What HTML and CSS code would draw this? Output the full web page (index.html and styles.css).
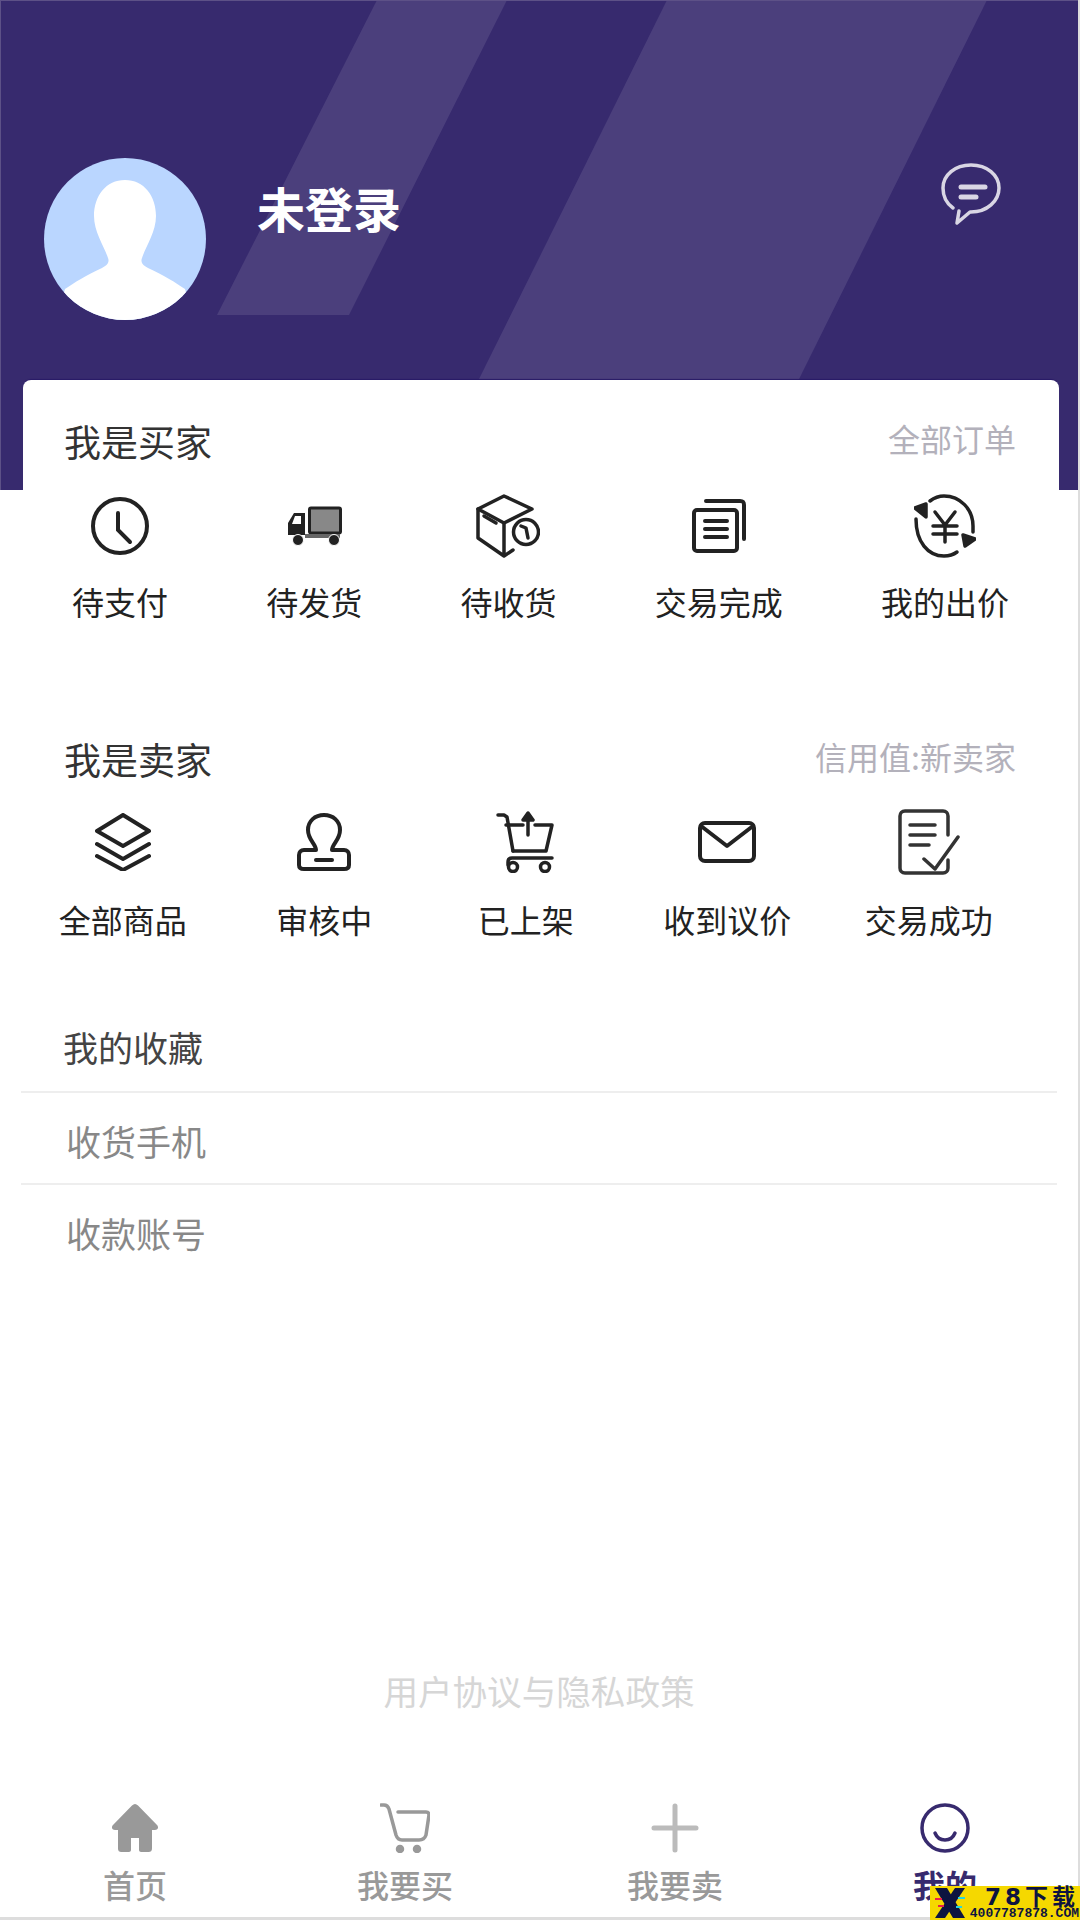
FILE: index.html
```html
<!DOCTYPE html>
<html lang="zh-CN">
<head>
  <meta charset="UTF-8" />
  <title>我的</title>
  <link rel="stylesheet" href="styles.css">
</head>
<body>
  <div class="page">
    <header class="top">
      <svg class="stripes" width="1078" height="490" viewBox="0 0 1078 490">
        <polygon points="377,0 507,0 349,315 217,315" fill="#fff" fill-opacity="0.1" />
        <polygon points="667,0 987,0 744,490 424,490" fill="#fff" fill-opacity="0.1" />
      </svg>
      <div class="avatar">
        <svg width="162" height="162" viewBox="0 0 162 162">
          <defs>
            <clipPath id="avatarClip"><circle cx="81" cy="81" r="81" /></clipPath>
          </defs>
          <circle cx="81" cy="81" r="81" fill="#bad6ff" />
          <path clip-path="url(#avatarClip)" d="M81 22C62 22 50 38 50 58c0 16 10 30 14 42 2 5-2 8-6 10-16 7-28 15-37 21l-9 31h138l-9-31c-9-6-21-14-37-21-4-2-8-5-6-10 4-12 14-26 14-42C112 38 100 22 81 22z" fill="#fff" />
        </svg>
      </div>
      <div class="name">未登录</div>
      <svg class="chat" width="64" height="66" viewBox="0 0 64 66" fill="none" stroke="#d9d6e4" stroke-width="3.5" stroke-linecap="round" stroke-linejoin="round">
        <path d="M12 45C5 40 2 33 2 25 2 12 14 2 30 2s28 10 28 23-12 24-28 24h-1L16 60l2-12" />
        <path d="M20 24h24" stroke-width="5" />
        <path d="M20 34h15" stroke-width="5" />
      </svg>
    </header>

    <main class="card">
      <section class="block">
        <div class="block-head">
          <h2 class="block-title">我是买家</h2>
          <span class="block-more">全部订单</span>
        </div>
        <div class="buyer-row">
          <a class="entry">
            <span class="entry-icon">
              <svg width="58" height="58" viewBox="0 0 58 58" fill="none" stroke="#222" stroke-width="4" stroke-linecap="round">
                <circle cx="29" cy="29" r="27" />
                <path d="M27 16v17l12 12" />
              </svg>
            </span>
            <span class="entry-label">待支付</span>
          </a>
          <a class="entry">
            <span class="entry-icon">
              <svg width="56" height="42" viewBox="0 0 56 42">
                <rect x="23.500" y="3" width="31" height="25" rx="1.500" fill="#888" stroke="#222" stroke-width="3" />
                <path d="M2 30V18l6-10h11v22H2z" fill="#222" />
                <path d="M9 11h6v8H6z" fill="#fff" />
                <rect x="19" y="29" width="35" height="4" fill="#666" />
                <circle cx="12" cy="35" r="5.500" fill="#222" stroke="#fff" stroke-width="1" />
                <circle cx="48" cy="35" r="5.500" fill="#222" stroke="#fff" stroke-width="1" />
              </svg>
            </span>
            <span class="entry-label">待发货</span>
          </a>
          <a class="entry">
            <span class="entry-icon">
              <svg width="64" height="64" viewBox="0 0 64 64" fill="none" stroke="#222" stroke-width="3.500" stroke-linecap="round" stroke-linejoin="round">
                <path d="M28 2L2 15l26 14 28-14L28 2z" />
                <path d="M2 15v29l26 18 9-6M28 29v33" />
                <path d="M8 22l12 7" />
                <circle cx="50" cy="38" r="12.500" />
                <path d="M45 32l5 2 2 10" />
              </svg>
            </span>
            <span class="entry-label">待收货</span>
          </a>
          <a class="entry">
            <span class="entry-icon">
              <svg width="54" height="54" viewBox="0 0 54 54" fill="none" stroke="#222" stroke-width="4" stroke-linecap="round" stroke-linejoin="round">
                <rect x="2" y="11" width="43" height="41" rx="3" />
                <path d="M14 2h34c3 0 4 1 4 4v34" />
                <path d="M13 22h22M13 30h22M13 38h22" />
              </svg>
            </span>
            <span class="entry-label">交易完成</span>
          </a>
          <a class="entry">
            <span class="entry-icon">
              <svg width="62" height="64" viewBox="0 0 62 64" fill="none" stroke="#222" stroke-width="3.500" stroke-linecap="round" stroke-linejoin="round">
                <path d="M16 7c4-3 9-5 14-5 16 0 29 13 29 30v6" />
                <path d="M43 58c-4 3-8 4-13 4C14 62 2 48 2 25" />
                <path d="M1 14l11-4v13z" fill="#222" />
                <path d="M49 41l12 4-10 7z" fill="#222" />
                <path d="M21 18l10 13 10-13M19 32h24M19 40h24M31 31v17" />
              </svg>
            </span>
            <span class="entry-label">我的出价</span>
          </a>
        </div>
      </section>

      <section class="block block-seller">
        <div class="block-head">
          <h2 class="block-title">我是卖家</h2>
          <span class="block-more">信用值:新卖家</span>
        </div>
        <div class="seller-row">
          <a class="entry">
            <span class="entry-icon">
              <svg width="56" height="58" viewBox="0 0 56 58" fill="none" stroke="#222" stroke-width="4" stroke-linecap="round" stroke-linejoin="round">
                <path d="M28 2L2 18l26 15 26-15L28 2z" />
                <path d="M2 31l26 15 26-15" />
                <path d="M2 43l26 14 26-14" />
              </svg>
            </span>
            <span class="entry-label">全部商品</span>
          </a>
          <a class="entry">
            <span class="entry-icon">
              <svg width="54" height="58" viewBox="0 0 54 58" fill="none" stroke="#222" stroke-width="4" stroke-linecap="round" stroke-linejoin="round">
                <path d="M19 37c0-6-8-10-8-20C11 8 18 2 27 2s16 6 16 15c0 10-8 14-8 20h12c3 0 5 2 5 5v10c0 3-2 4-5 4H7c-3 0-5-1-5-4V42c0-3 2-5 5-5h12z" />
                <path d="M19 47h16" />
              </svg>
            </span>
            <span class="entry-label">审核中</span>
          </a>
          <a class="entry">
            <span class="entry-icon">
              <svg width="60" height="62" viewBox="0 0 60 62" fill="none" stroke="#222" stroke-width="3.500" stroke-linecap="round" stroke-linejoin="round">
                <path d="M2 4h6l3 2 6 34" />
                <path d="M10 14h17M39 14h17l-6 26H17" />
                <path d="M56 47H16c-3 0-4 2-4 4v3" />
                <path d="M32 24V6" />
                <path d="M27 9l5-7 5 7z" fill="#222" />
                <circle cx="17" cy="56" r="4.500" />
                <circle cx="49" cy="56" r="4.500" />
              </svg>
            </span>
            <span class="entry-label">已上架</span>
          </a>
          <a class="entry">
            <span class="entry-icon">
              <svg width="58" height="42" viewBox="0 0 58 42" fill="none" stroke="#222" stroke-width="4" stroke-linecap="round" stroke-linejoin="round">
                <rect x="2" y="2" width="54" height="38" rx="5" />
                <path d="M3 5l26 20L55 5" />
              </svg>
            </span>
            <span class="entry-label">收到议价</span>
          </a>
          <a class="entry">
            <span class="entry-icon">
              <svg width="62" height="66" viewBox="0 0 62 66" fill="none" stroke="#333" stroke-width="3.500" stroke-linecap="round" stroke-linejoin="round">
                <path d="M50 26V7c0-3-2-5-5-5H7C4 2 2 4 2 7v52c0 3 2 5 5 5h38c3 0 5-2 5-5V51" />
                <path d="M12 16h25M12 26h25M12 36h19" />
                <path d="M26 50l11 10 23-32" />
              </svg>
            </span>
            <span class="entry-label">交易成功</span>
          </a>
        </div>
      </section>

      <ul class="links">
        <li class="link link-dark">我的收藏</li>
        <li class="link">收货手机</li>
        <li class="link">收款账号</li>
      </ul>
    </main>

    <div class="agreement">用户协议与隐私政策</div>

    <nav class="tabs">
      <a class="tab">
        <svg width="50" height="50" viewBox="0 0 50 50">
          <path d="M25 1c1 0 2 .5 3 1.500L47 22c2 2 1 5-2 5h-3v18c0 3-1 4-4 4h-7c-1 0-2-1-2-2V35h-8v12c0 1-1 2-2 2h-7c-3 0-4-1-4-4V27H5c-3 0-4-3-2-5L22 2.500C23 1.500 24 1 25 1z" fill="#999" />
        </svg>
        <span>首页</span>
      </a>
      <a class="tab">
        <svg width="50" height="50" viewBox="0 0 50 50" fill="none" stroke="#999" stroke-width="3.500" stroke-linecap="round" stroke-linejoin="round">
          <path d="M1 2h3c2 0 4 1 5 4l7 26c1 3 3 5 6 5h17c3 0 6-2 7-5l3-20c0-2-1-3-3-3H18" />
          <circle cx="20" cy="46" r="2.500" fill="#999" />
          <circle cx="37" cy="46" r="2.500" fill="#999" />
        </svg>
        <span>我要买</span>
      </a>
      <a class="tab">
        <svg width="50" height="50" viewBox="0 0 50 50" fill="none" stroke="#bbb" stroke-width="5" stroke-linecap="round">
          <path d="M25 3v44M4 25h42" />
        </svg>
        <span>我要卖</span>
      </a>
      <a class="tab tab-active">
        <svg width="50" height="50" viewBox="0 0 50 50" fill="none" stroke="#372a6e" stroke-width="3.500" stroke-linecap="round">
          <circle cx="25" cy="25" r="23" />
          <path d="M15 30c2 5 6 7 10 7s8-2 10-7" />
        </svg>
        <span>我的</span>
      </a>
    </nav>
  </div>

  <div class="mark">
    <svg width="32" height="32" viewBox="0 0 32 32">
      <polygon points="1,1 13,1 31,31 19,31" fill="#0d1440" />
      <polygon points="31,1 21,1 1,31 11,31" fill="#0d1440" />
      <path d="M1 12h7M4 19h6" stroke="#e8204c" stroke-width="2" />
      <path d="M24 11h7M22 20h6" stroke="#27d5e0" stroke-width="2" />
    </svg>
    <div class="mark-text">
      <span class="mark-big">78下载</span>
      <span class="mark-small">4007787878.COM</span>
    </div>
  </div>
</body>
</html>
```

FILE: styles.css
```css
* { box-sizing: border-box; }

body {
  margin: 0;
  background: #fff;
  font-family: "Noto Sans CJK SC", "Liberation Sans", sans-serif;
}

a { color: inherit; text-decoration: none; }

.page {
  display: flex;
  flex-direction: column;
  width: 1080px;
  height: 1920px;
  border-right: 2px solid #ddd;
  border-bottom: 3px solid #ddd;
}

/* header */
.top {
  position: relative;
  display: flex;
  align-items: flex-start;
  height: 490px;
  flex-shrink: 0;
  padding: 157px 73px 0 43px;
  background: #372a6e;
  border-top: 1px solid #5d5187;
  border-left: 1px solid #5d5187;
  overflow: hidden;
}

.stripes {
  position: absolute;
  top: -1px;
  left: -1px;
}

.avatar {
  position: relative;
  width: 162px;
  height: 162px;
  flex-shrink: 0;
}

.avatar svg { display: block; }

.name {
  position: relative;
  margin: 21px 0 0 51px;
  color: #fff;
  font-size: 48px;
  font-weight: 700;
  line-height: 56px;
}

.chat {
  position: relative;
  margin: 5px 0 0 auto;
}

/* card */
.card {
  position: relative;
  margin: -110px 19px 0 23px;
  padding-top: 36px;
  background: #fff;
  border-radius: 8px 8px 0 0;
  box-shadow: 0 -2px 1px -1px #291a66;
}

.block-head {
  display: flex;
  justify-content: space-between;
  align-items: flex-start;
  padding: 0 43px 0 41px;
}

.block-title {
  margin: 0;
  color: #333;
  font-size: 37px;
  font-weight: 400;
  line-height: 50px;
}

.block-more {
  color: #b3b1bb;
  font-size: 32px;
  line-height: 44px;
}

.buyer-row {
  display: flex;
  justify-content: space-between;
  margin-top: 28px;
  padding: 0 50px 0 49px;
}

.buyer-row .entry-label { margin-top: 23px; }

.block-seller { margin-top: 113px; }

.seller-row {
  display: grid;
  grid-template-columns: repeat(5, 201.5px);
  margin: 26px 0 0 -1px;
}

.entry {
  display: flex;
  flex-direction: column;
  align-items: center;
}

.entry-icon {
  display: flex;
  align-items: center;
  justify-content: center;
  height: 64px;
}

.entry-label {
  margin-top: 25px;
  color: #222;
  font-size: 32px;
  line-height: 40px;
  white-space: nowrap;
}

/* list */
.links {
  margin: 62px 2px 0 -2px;
  padding: 0;
  list-style: none;
}

.link {
  height: 92px;
  padding: 26px 0 0 45px;
  color: #888;
  font-size: 35px;
  line-height: 44px;
  border-bottom: 2px solid #eee;
}

.link:last-child { border-bottom: 0; }

.link-dark {
  padding: 24px 0 0 42px;
  color: #444;
}

.agreement {
  margin-top: 391px;
  color: #d6d6d6;
  font-size: 34.6px;
  line-height: 44px;
  text-align: center;
}

/* bottom tabs */
.tabs {
  display: grid;
  grid-template-columns: repeat(4, 270px);
  margin-top: auto;
  height: 114px;
  flex-shrink: 0;
}

.tab {
  display: flex;
  flex-direction: column;
  align-items: center;
  color: #999;
  font-size: 32px;
  font-weight: 500;
  line-height: 38px;
}

.tab svg { flex-shrink: 0; }

.tab span { margin-top: 12px; }

.tab-active { color: #372a6e; font-weight: 700; }

/* watermark over the corner */
.mark {
  position: absolute;
  left: 930px;
  top: 1884px;
  display: flex;
  width: 150px;
  height: 36px;
  padding: 3px 0 0 4px;
  background: linear-gradient(transparent 2px, #f5d800 2px);
  color: #0d1440;
}

.mark svg { flex-shrink: 0; }

.mark-text {
  display: flex;
  flex-direction: column;
  align-items: flex-end;
  flex: 1;
  min-width: 0;
}

.mark-big {
  padding-right: 1px;
  font-family: "DejaVu Sans", "Noto Sans CJK SC", sans-serif;
  font-size: 23px;
  font-weight: 700;
  line-height: 21px;
  letter-spacing: 4px;
  white-space: nowrap;
}

.mark-small {
  padding-right: 1px;
  font-family: "Liberation Mono", monospace;
  font-size: 13px;
  line-height: 11px;
  font-weight: 700;
  white-space: nowrap;
}
```
